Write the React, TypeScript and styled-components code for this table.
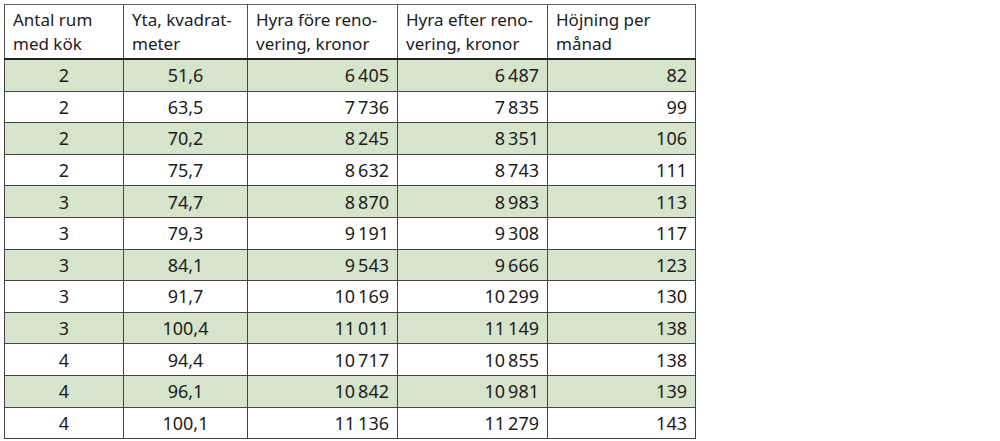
import styled, { createGlobalStyle } from 'styled-components';

const GlobalStyle = createGlobalStyle`
  body {
    margin: 0;
    background: #ffffff;
    font-family: 'Noto Sans', 'Open Sans', sans-serif;
  }
`;

const Page = styled.div`
  padding: 4px 0 0 4px;
`;

const Table = styled.table`
  border-collapse: collapse;
  table-layout: fixed;
  width: 692px;
  border: 1px solid #6a6a6a;
  color: #1c1c1c;
`;

const HeadCell = styled.th`
  text-align: left;
  vertical-align: top;
  font-weight: 400;
  font-size: 17px;
  line-height: 24px;
  padding: 3px 8px 2px 8px;
  height: 48px;
  border-left: 1px solid #555;
  border-right: 1px solid #555;
  border-bottom: 2px solid #222;
`;

const Row = styled.tr<{ $shaded: boolean }>`
  background: ${p => (p.$shaded ? '#d6e4cc' : '#ffffff')};
`;

const Cell = styled.td<{ $align: 'center' | 'right' }>`
  text-align: ${p => p.$align};
  font-size: 18px;
  height: 30.6px;
  padding: 0 8px;
  line-height: 20px;
  border: 1px solid #444;
`;

const headers = [
  'Antal rum med kök',
  'Yta, kvadrat- meter',
  'Hyra före reno- vering, kronor',
  'Hyra efter reno- vering, kronor',
  'Höjning per månad',
];

const widths = [119, 124, 150, 150, 148];

const sp = '\u202F';
const rows: string[][] = [
  ['2', '51,6', `6${sp}405`, `6${sp}487`, '82'],
  ['2', '63,5', `7${sp}736`, `7${sp}835`, '99'],
  ['2', '70,2', `8${sp}245`, `8${sp}351`, '106'],
  ['2', '75,7', `8${sp}632`, `8${sp}743`, '111'],
  ['3', '74,7', `8${sp}870`, `8${sp}983`, '113'],
  ['3', '79,3', `9${sp}191`, `9${sp}308`, '117'],
  ['3', '84,1', `9${sp}543`, `9${sp}666`, '123'],
  ['3', '91,7', `10${sp}169`, `10${sp}299`, '130'],
  ['3', '100,4', `11${sp}011`, `11${sp}149`, '138'],
  ['4', '94,4', `10${sp}717`, `10${sp}855`, '138'],
  ['4', '96,1', `10${sp}842`, `10${sp}981`, '139'],
  ['4', '100,1', `11${sp}136`, `11${sp}279`, '143'],
];

export default function App() {
  return (
    <>
      <GlobalStyle />
      <Page>
        <Table>
          <colgroup>
            {widths.map((w, i) => (
              <col key={i} style={{ width: w }} />
            ))}
          </colgroup>
          <thead>
            <tr>
              {headers.map(h => (
                <HeadCell key={h}>{h}</HeadCell>
              ))}
            </tr>
          </thead>
          <tbody>
            {rows.map((r, i) => (
              <Row key={i} $shaded={i % 2 === 0}>
                {r.map((v, j) => (
                  <Cell key={j} $align={j < 2 ? 'center' : 'right'}>
                    {v}
                  </Cell>
                ))}
              </Row>
            ))}
          </tbody>
        </Table>
      </Page>
    </>
  );
}
